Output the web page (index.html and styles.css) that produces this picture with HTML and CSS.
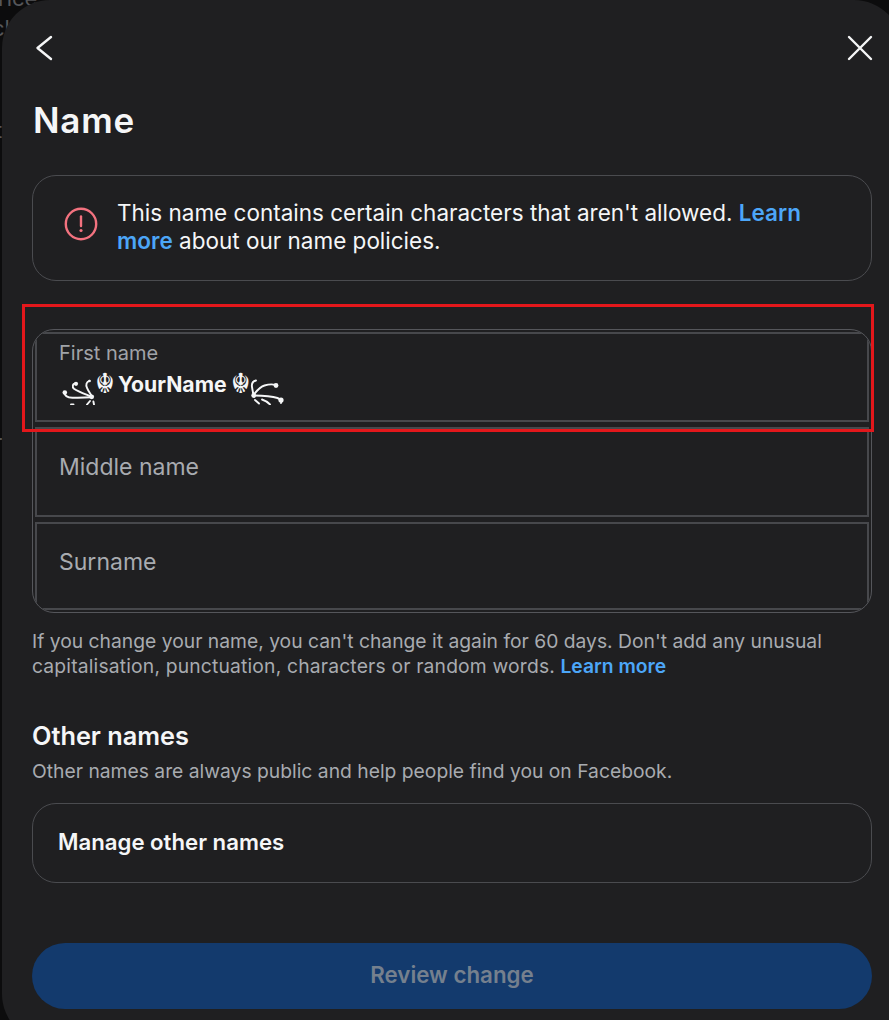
FILE: index.html
```html
<!DOCTYPE html>
<html lang="en">
<head>
<meta charset="utf-8">
<title>Name</title>
<link rel="stylesheet" href="styles.css">
</head>
<body>
<div class="backdrop-text">
  <span class="bg-a">rice</span>
  <span class="bg-b">cl</span>
  <span class="bg-c">t</span>
  <span class="bg-d">r</span>
</div>
<main class="modal">
  <header class="topbar">
    <svg class="icon-back" viewBox="0 0 18 26" width="18" height="26"><path d="M16 2 2.500 13 16 24" fill="none" stroke="#f5f6f7" stroke-width="2.400" stroke-linecap="round" stroke-linejoin="round"/></svg>
    <svg class="icon-close" viewBox="0 0 26 26" width="26" height="26"><path d="M2 2l22 22M24 2 2 24" fill="none" stroke="#f5f6f7" stroke-width="2.400" stroke-linecap="round"/></svg>
  </header>
  <h1 class="title">Name</h1>
  <section class="alert">
    <svg class="icon-alert" viewBox="0 0 34 34" width="34" height="34"><circle cx="17" cy="17" r="15.200" fill="none" stroke="#f3727f" stroke-width="2.400"/><path d="M17 9.500v9.500" stroke="#f3727f" stroke-width="2.400" stroke-linecap="round"/><circle cx="17" cy="23.500" r="1.600" fill="#f3727f"/></svg>
    <p class="alert-text">This name contains certain characters that aren't allowed. <a class="link">Learn more</a> about our name policies.</p>
  </section>
  <section class="fields">
    <div class="field field-filled">
      <label class="field-label">First name</label>
      <div class="field-value">
        <svg class="flourish flourish-left" viewBox="0 0 34 26" width="34" height="26"><g fill="none" stroke="#f5f6f7" stroke-width="1.900" stroke-linecap="round"><path d="M2.500 13.500c0 4 3 5 8 5.200 6 .2 13 0 19 -.4"/><path d="M13.500 4.500c-3 0-3.500 3.500-1.500 5.200 4 2.800 11 5.300 17 7.800"/><path d="M27.500 1.800c-3 1-4 4-2.500 7 1 2.500 3 5.500 4.500 8"/><path d="M9 25.500h2.500M25 25.500l3-3.500M32 25.500l-.6-3"/></g><circle cx="29.700" cy="17.800" r="2.400" fill="#f5f6f7"/><circle cx="2.800" cy="13.500" r="2.300" fill="#f5f6f7"/><circle cx="14" cy="4.800" r="2.100" fill="#f5f6f7"/><circle cx="27.500" cy="2" r="1.300" fill="#f5f6f7"/></svg>
        <span class="khanda">☬</span>
        <span class="value-name">YourName</span>
        <span class="khanda">☬</span>
        <svg class="flourish flourish-right" viewBox="0 0 34 26" width="34" height="26"><g fill="none" stroke="#f5f6f7" stroke-width="1.900" stroke-linecap="round"><path d="M3.500 16c3-4 6-8 11-9.500 4-1.200 8-1.500 11-.5"/><path d="M3.500 16.500c8 0 18 .5 24 2.500 2.500 1 4.500 2.500 3.500 5"/><path d="M6 1.500c-3 .8-4.500 3.500-4 6.500.3 2 .8 4.500 1.500 8"/><path d="M5 21l4 3.500M12 20.500c3 1 6 3 8 5"/></g><circle cx="3.700" cy="16.500" r="2.400" fill="#f5f6f7"/><circle cx="26" cy="6.500" r="2.400" fill="#f5f6f7"/><circle cx="31" cy="21" r="2.600" fill="#f5f6f7"/></svg>
      </div>
    </div>
    <div class="field field-empty"><span class="placeholder">Middle name</span></div>
    <div class="field field-empty field-last"><span class="placeholder">Surname</span></div>
  </section>
  <p class="hint">If you change your name, you can't change it again for 60 days. Don't add any unusual <span class="hint-wide">capitalisation, punctuation, characters or random words.</span> <a class="link">Learn more</a></p>
  <h2 class="subtitle">Other names</h2>
  <p class="sub-hint">Other names are always public and help people find you on Facebook.</p>
  <div class="manage">Manage other names</div>
  <button class="review" type="button">Review change</button>
</main>
<div class="highlight"></div>
</body>
</html>
```
FILE: styles.css
```css
* { box-sizing: border-box; }
html, body { margin: 0; height: 1020px; overflow: hidden; background: #0c0c0d; }
body { font-family: Inter, "Liberation Sans", sans-serif; position: relative; width: 889px; }

.backdrop-text span { position: absolute; color: #55565a; font-size: 22px; line-height: 24px; }
.bg-a { left: -2px; top: -14px; }
.bg-b { left: -8px; top: 16px; }
.bg-c { left: -5px; top: 118px; }
.bg-d { left: -6px; top: 430px; }

.modal {
  position: relative;
  margin-left: 2px;
  width: 900px;
  height: 1042px;
  background: #1f1f21;
  border-radius: 48px;
  padding: 35px 30px 0;
  color: #f5f6f7;
}
.topbar { display: flex; justify-content: space-between; padding: 0 0 0 3px; height: 26px; margin-right: -1px; }
.title { margin: 39px 0 0 1px; font-size: 35px; line-height: 40px; font-weight: 600; letter-spacing: .8px; }

.alert {
  margin-top: 35px;
  height: 106px;
  width: 840px;
  border: 1px solid #4a4b4f;
  border-radius: 24px;
  display: flex;
  align-items: center;
  padding: 0 52px 2px 31px;
  gap: 19px;
}
.icon-alert { flex: none; margin-bottom: 6px; }
.alert-text { margin: 0; font-size: 22.500px; line-height: 28px; color: #f5f6f7; }
.link { color: #4ca6f8; font-weight: 600; }

.fields {
  margin-top: 48px;
  width: 840px;
  height: 284px;
  border: 1px solid #55565b;
  border-radius: 22px;
  padding: 2px;
  display: grid;
  grid-template-rows: 90px 90px 1fr;
  gap: 5px;
  overflow: hidden;
}
.field {
  border: 2px solid #47484c;
  padding: 0 22px;
  display: flex;
  flex-direction: column;
}
.field-empty { justify-content: center; padding-bottom: 10px; }
.field-last { padding-bottom: 8px; }
.placeholder { font-size: 23px; line-height: 28px; color: #a8abb0; }
.field-filled { padding-top: 7px; }
.field-label { font-size: 20px; line-height: 24px; color: #a0a3a8; }
.field-value { display: flex; align-items: flex-start; height: 40px; margin-left: 3px; }
.khanda { font-family: "DejaVu Sans", sans-serif; font-size: 28px; line-height: 32px; color: #f5f6f7; margin-top: 3px; }
.value-name { font-size: 21.200px; line-height: 26px; font-weight: 700; margin: 6px 4px 0 3px; }
.flourish { margin-top: 14px; }
.flourish-left { margin-right: -1px; }
.flourish-right { margin-left: -1px; }

.hint { margin: 16px 0 0; width: 840px; font-size: 19.300px; line-height: 25px; color: #a8abb0; }
.hint-wide { letter-spacing: .17px; }
.subtitle { margin: 42px 0 0; font-size: 25.300px; line-height: 30px; font-weight: 600; }
.sub-hint { margin: 8px 0 0; font-size: 19.300px; line-height: 25px; color: #a8abb0; }
.manage {
  margin-top: 19px;
  width: 840px;
  height: 80px;
  border: 1px solid #4a4b4f;
  border-radius: 24px;
  padding: 0 25px 3px;
  display: flex;
  align-items: center;
  font-size: 22.200px;
  font-weight: 600;
}
.review {
  display: block;
  margin-top: 60px;
  width: 840px;
  height: 66px;
  border: 0;
  border-radius: 33px;
  background: #133a6d;
  color: #75808e;
  font-family: inherit;
  font-size: 22.300px;
  font-weight: 600;
  padding: 0 0 4px;
}

.highlight {
  position: absolute;
  left: 22px;
  top: 304px;
  width: 852px;
  height: 128px;
  border: 3px solid #e3171b;
}
```
